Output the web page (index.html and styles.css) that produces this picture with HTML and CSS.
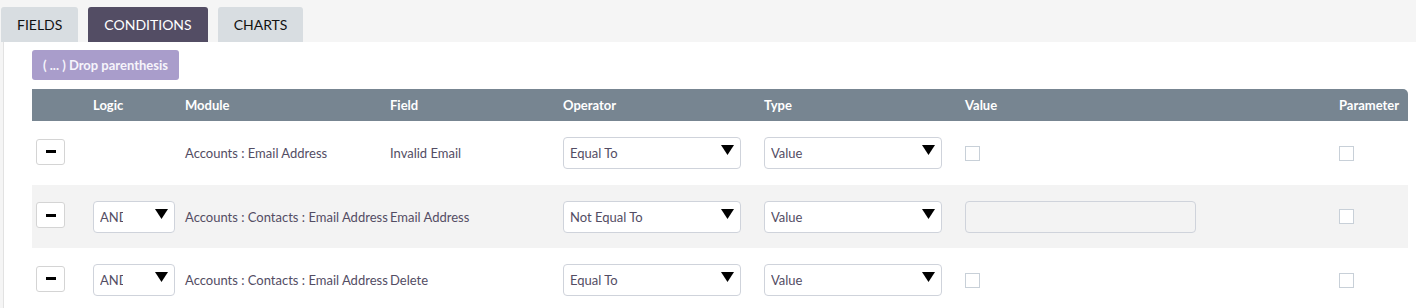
FILE: index.html
```html
<!DOCTYPE html>
<html lang="en">
<head>
  <meta charset="UTF-8">
  <title>Report conditions</title>
  <link rel="stylesheet" href="styles.css">
</head>
<body>
  <div class="tabs">
    <div class="tab">Fields</div>
    <div class="tab active">Conditions</div>
    <div class="tab">Charts</div>
  </div>

  <div class="panel">
    <button class="drop-btn">( ... ) Drop parenthesis</button>

    <div class="cond-table">
      <div class="cond-row head">
        <div></div>
        <div>Logic</div>
        <div>Module</div>
        <div>Field</div>
        <div>Operator</div>
        <div>Type</div>
        <div>Value</div>
        <div>Parameter</div>
      </div>

      <!-- row 1 -->
      <div class="cond-row">
        <div><button class="minus-btn"><span></span></button></div>
        <div></div>
        <div>Accounts : Email Address</div>
        <div>Invalid Email</div>
        <div>
          <div class="select wide"><span class="select-text">Equal To</span>
            <svg class="arrow" width="13" height="10" viewBox="0 0 13 10"><path d="M0 0H13L6.5 10Z"/></svg>
          </div>
        </div>
        <div>
          <div class="select wide"><span class="select-text">Value</span>
            <svg class="arrow" width="13" height="10" viewBox="0 0 13 10"><path d="M0 0H13L6.5 10Z"/></svg>
          </div>
        </div>
        <div><span class="check"></span></div>
        <div><span class="check"></span></div>
      </div>

      <!-- row 2 -->
      <div class="cond-row alt">
        <div><button class="minus-btn"><span></span></button></div>
        <div>
          <div class="select logic"><span class="select-text">AND</span>
            <svg class="arrow" width="13" height="10" viewBox="0 0 13 10"><path d="M0 0H13L6.5 10Z"/></svg>
          </div>
        </div>
        <div>Accounts : Contacts : Email Address</div>
        <div>Email Address</div>
        <div>
          <div class="select wide"><span class="select-text">Not Equal To</span>
            <svg class="arrow" width="13" height="10" viewBox="0 0 13 10"><path d="M0 0H13L6.5 10Z"/></svg>
          </div>
        </div>
        <div>
          <div class="select wide"><span class="select-text">Value</span>
            <svg class="arrow" width="13" height="10" viewBox="0 0 13 10"><path d="M0 0H13L6.5 10Z"/></svg>
          </div>
        </div>
        <div><div class="text-input"></div></div>
        <div><span class="check"></span></div>
      </div>

      <!-- row 3 -->
      <div class="cond-row">
        <div><button class="minus-btn"><span></span></button></div>
        <div>
          <div class="select logic"><span class="select-text">AND</span>
            <svg class="arrow" width="13" height="10" viewBox="0 0 13 10"><path d="M0 0H13L6.5 10Z"/></svg>
          </div>
        </div>
        <div>Accounts : Contacts : Email Address</div>
        <div>Delete</div>
        <div>
          <div class="select wide"><span class="select-text">Equal To</span>
            <svg class="arrow" width="13" height="10" viewBox="0 0 13 10"><path d="M0 0H13L6.5 10Z"/></svg>
          </div>
        </div>
        <div>
          <div class="select wide"><span class="select-text">Value</span>
            <svg class="arrow" width="13" height="10" viewBox="0 0 13 10"><path d="M0 0H13L6.5 10Z"/></svg>
          </div>
        </div>
        <div><span class="check"></span></div>
        <div><span class="check"></span></div>
      </div>
    </div>
  </div>
</body>
</html>
```

FILE: styles.css
```css
html, body {
  margin: 0;
  padding: 0;
  font-family: 'Lato', sans-serif;
  background-color: #f5f5f5;
  color: #534d64;
  overflow: hidden;
}

/* top tabs */
.tabs {
  display: flex;
  gap: 10px;
  padding: 7px 0 0 1px;
  height: 35px;
}

.tab {
  background: #d8dde1;
  color: #111;
  font-size: 14px;
  text-transform: uppercase;
  padding: 0 16px;
  line-height: 35px;
  border-radius: 3px 3px 0 0;
}

.tab.active {
  background: #534d64;
  color: #fff;
}

/* white panel */
.panel {
  margin-left: 3px;
  border-left: 1px solid #e2e2e2;
  background: #fff;
  padding: 8px 8px 0 28px;
  height: 258px;
  overflow: hidden;
}

.drop-btn {
  display: block;
  height: 30px;
  padding: 0 11px;
  background: #a99dcb;
  color: #f6f4fb;
  border: none;
  border-radius: 3px;
  font-family: 'Lato', sans-serif;
  font-weight: bold;
  font-size: 13px;
  margin-bottom: 9px;
}

/* conditions grid */
.cond-table {
  width: 1376px;
}

.cond-row {
  display: grid;
  grid-template-columns: 61px 92px 205px 173px 201px 201px 374px 1fr;
  align-items: center;
  height: 64px;
  font-size: 13px;
}

.cond-row.head {
  height: 32px;
  background: #778591;
  color: #fff;
  font-weight: bold;
  border-top-right-radius: 5px;
}

.cond-row.alt {
  background: #f3f3f3;
  height: 63px;
}

.minus-btn {
  display: flex;
  align-items: center;
  justify-content: center;
  width: 29px;
  height: 26px;
  margin: 0 0 3px 4px;
  padding: 0;
  background: #fff;
  border: 1px solid #d4d4d4;
  border-radius: 3px;
}

.minus-btn span {
  width: 10px;
  height: 3px;
  background: #000;
}

.select {
  display: flex;
  align-items: center;
  height: 30px;
  border: 1px solid #cfd3db;
  border-radius: 4px;
  background: #fff;
  padding: 0 6px;
}

.select.wide {
  width: 164px;
}

.select.logic {
  width: 68px;
}

.select-text {
  flex: 1;
  white-space: nowrap;
  overflow: hidden;
}

.select.logic .select-text {
  flex: 0 0 23px;
  margin-right: auto;
}

.select .arrow {
  margin: 0 0 6px 0;
  flex: none;
  fill: #000;
}

.check {
  display: block;
  width: 13px;
  height: 13px;
  border: 1px solid #c8d0d8;
  background: #fff;
}

.text-input {
  width: 229px;
  height: 30px;
  border: 1px solid #cfd3db;
  border-radius: 4px;
  background: #f3f3f3;
}
```
